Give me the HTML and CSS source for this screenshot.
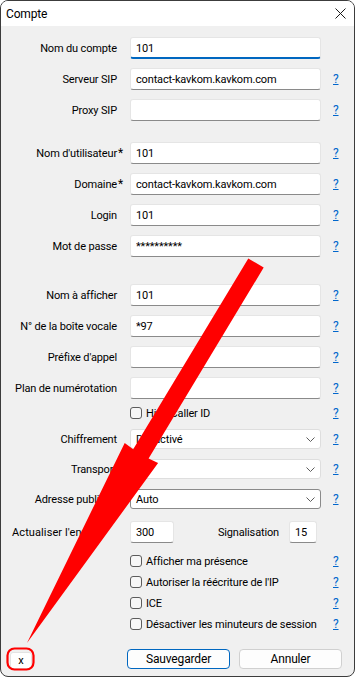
FILE: index.html
```html
<!DOCTYPE html>
<html lang="fr">
<head>
  <meta charset="UTF-8"/>
  <title>Compte</title>
  <link rel="stylesheet" href="styles.css">
</head>
<body>
  <div class="window">
    <div class="titlebar">
      <span class="title">Compte</span>
      <svg class="close" viewBox="0 0 11 11"><path d="M0.5 0.5L10.5 10.5M10.5 0.5L0.5 10.5"/></svg>
    </div>

    <div class="content">
      <div class="group accounts">
        <div class="row"><label>Nom du compte</label><span class="req"></span><input class="field focused" value="101"></div>
        <div class="row"><label>Serveur SIP</label><span class="req"></span><input class="field" value="contact-kavkom.kavkom.com"><a class="help">?</a></div>
        <div class="row"><label>Proxy SIP</label><span class="req"></span><input class="field" value=""><a class="help">?</a></div>
      </div>

      <div class="group auth">
        <div class="row"><label>Nom d'utilisateur</label><span class="req">*</span><input class="field" value="101"><a class="help">?</a></div>
        <div class="row"><label>Domaine</label><span class="req">*</span><input class="field" value="contact-kavkom.kavkom.com"><a class="help">?</a></div>
        <div class="row"><label>Login</label><span class="req"></span><input class="field" value="101"><a class="help">?</a></div>
        <div class="row"><label>Mot de passe</label><span class="req"></span><input class="field" value="**********"><a class="help">?</a></div>
      </div>

      <div class="group display">
        <div class="row"><label>Nom à afficher</label><span class="req"></span><input class="field" value="101"><a class="help">?</a></div>
        <div class="row"><label>N° de la boîte vocale</label><span class="req"></span><input class="field" value="*97"><a class="help">?</a></div>
        <div class="row"><label>Préfixe d'appel</label><span class="req"></span><input class="field" value=""><a class="help">?</a></div>
        <div class="row"><label>Plan de numérotation</label><span class="req"></span><input class="field" value=""><a class="help">?</a></div>
      </div>

      <div class="row check hide-id"><span></span><span></span><div class="check-item"><span class="box"></span>Hide Caller ID</div><a class="help">?</a></div>

      <div class="group combos">
        <div class="row combo-row"><label>Chiffrement</label><span class="req"></span>
          <div class="combo"><span>Désactivé</span><svg viewBox="0 0 9 5"><path d="M0.5 0.5L4.5 4.5L8.5 0.5"/></svg></div><a class="help">?</a></div>
        <div class="row combo-row"><label>Transport</label><span class="req"></span>
          <div class="combo"><span></span><svg viewBox="0 0 9 5"><path d="M0.5 0.5L4.5 4.5L8.5 0.5"/></svg></div><a class="help">?</a></div>
        <div class="row combo-row"><label>Adresse publique</label><span class="req"></span>
          <div class="combo hover"><span>Auto</span><svg viewBox="0 0 9 5"><path d="M0.5 0.5L4.5 4.5L8.5 0.5"/></svg></div><a class="help">?</a></div>
      </div>

      <div class="row timers"><label class="short-label">Actualiser l'enre…</label><span class="req"></span>
        <div class="pair">
          <input class="field short" value="300">
          <span class="pair-label">Signalisation</span>
          <input class="field tiny" value="15">
        </div>
      </div>

      <div class="group options">
        <div class="row check"><span></span><span></span><div class="check-item"><span class="box"></span>Afficher ma présence</div><a class="help">?</a></div>
        <div class="row check"><span></span><span></span><div class="check-item"><span class="box"></span>Autoriser la réécriture de l'IP</div><a class="help">?</a></div>
        <div class="row check"><span></span><span></span><div class="check-item"><span class="box"></span>ICE</div><a class="help">?</a></div>
        <div class="row check"><span></span><span></span><div class="check-item"><span class="box"></span>Désactiver les minuteurs de session</div><a class="help">?</a></div>
      </div>
    </div>

    <div class="footer">
      <span class="tag">x</span>
      <button class="btn primary">Sauvegarder</button>
      <button class="btn">Annuler</button>
    </div>
  </div>

  <!-- annotation drawn over the screenshot -->
  <svg class="markup" viewBox="0 0 356 679">
    <polygon points="248.3,258.4 263.7,267.6 148.6,458.5 158.1,463.1 27,643 124.7,442.9 133.2,449.3"/>
    <rect x="7.5" y="648.5" width="26" height="21" rx="7"/>
  </svg>
</body>
</html>
```

FILE: styles.css
```css
* { box-sizing:border-box; }
body {
  margin:0; position:relative; background:#fff; color:#000;
  font-family:Roboto,"Liberation Sans",sans-serif; font-size:11px; letter-spacing:-.15px;
}
.window {
  width:355px; height:677px; border:1px solid #3c3c3c; border-radius:8px;
  overflow:hidden; background:#f0f0f0; display:flex; flex-direction:column;
}
.titlebar {
  height:25px; background:#fff; display:flex; align-items:center; padding:0 8px 0 5px; flex:none;
}
.title { font-size:12px; }
.close { margin-left:auto; width:11px; height:11px; }
.close path { stroke:#1a1a1a; stroke-width:1; fill:none; }

.content { padding:11px 0 0 11px; }
.group { display:flex; flex-direction:column; gap:9px; }
.auth { margin-top:21px; }
.display { margin-top:27px; }
.hide-id { margin-top:4px; }
.combos { margin-top:6px; gap:10px; }
.timers { margin-top:12px; }
.options { margin-top:8px; gap:1px; }

.row {
  display:grid; grid-template-columns:105px 13px 191px 1fr; align-items:center; height:22px;
}
.row label { text-align:right; white-space:nowrap; }
.row .short-label { text-align:left; letter-spacing:.1px; }
.req { padding-left:1px; font-size:12px; line-height:1; align-self:start; padding-top:5px; }
.help { padding-left:12px; color:#0066cc; text-decoration:underline; font-size:12px; }

.field {
  height:22px; width:100%; margin:0; padding:0 5px; font:inherit; color:#000; letter-spacing:inherit;
  background:#fff; border:1px solid #e5e5e5; border-bottom-color:#8a8a8a; border-radius:3px; outline:none;
}
.field.focused { border-bottom:2px solid #0067c0; padding-top:1px; }
.field.short { width:44px; }
.field.tiny { width:28px; }

.combo-row, .check { height:20px; }
.combo {
  height:20px; display:flex; align-items:center; justify-content:space-between; padding:0 5px;
  background:#fff; border:1px solid #dedede; border-radius:3px;
}
.combo.hover { border-color:#8a8a8a; }
.combo svg { width:9px; height:5px; }
.combo path { stroke:#5c5c5c; stroke-width:1; fill:none; }

.check-item { display:flex; align-items:center; white-space:nowrap; }
.box {
  width:12px; height:12px; margin-right:4px; border:1px solid #5c5c5c; border-radius:3px; background:#f7f7f7;
}

.pair { display:flex; align-items:center; }
.pair-label { flex:1; text-align:right; padding-right:10px; }
.pair .tiny { margin-right:4px; }

.footer {
  margin-top:auto; margin-bottom:7px; display:flex; align-items:flex-end; gap:9px; padding:0 12px 0 9px;
}
.tag {
  width:22px; height:17px; margin-right:auto; background:#fff; border:1px solid #e3e3e3; border-radius:3px;
  display:flex; align-items:center; justify-content:center; font-size:11px;
}
.btn {
  width:103px; height:20px; padding:0; font:inherit; font-size:12px; letter-spacing:inherit; color:#000;
  background:#fdfdfd; border:1px solid #d0d0d0; border-radius:4px;
}
.btn.primary { border-color:#0067c0; }

.markup { position:absolute; left:0; top:0; width:356px; height:679px; pointer-events:none; }
.markup polygon { fill:#ff0000; }
.markup rect { fill:none; stroke:#ff0000; stroke-width:2.2; }
```
